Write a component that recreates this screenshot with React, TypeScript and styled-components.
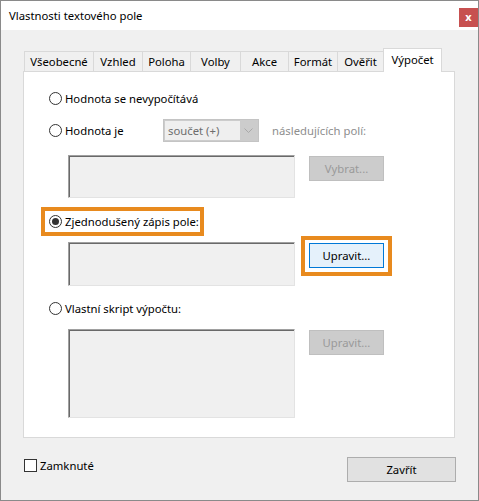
import React from "react";
import styled, { createGlobalStyle } from "styled-components";

const Global = createGlobalStyle`
  html, body { margin: 0; padding: 0; background: #fff; }
  body {
    font-family: "Noto Sans", "Segoe UI", sans-serif;
    font-size: 11.3px;
    color: #000;
  }
  * { box-sizing: border-box; }
`;

const Window = styled.div`
  width: 479px;
  height: 501px;
  border: 1px solid #8a8a8a;
  background: #f0f0f0;
  display: flex;
  flex-direction: column;
`;

const TitleBar = styled.div`
  height: 29px;
  background: #fff;
  display: flex;
  align-items: flex-start;
  justify-content: space-between;
  padding-left: 8px;
`;

const Title = styled.span`
  line-height: 29px;
  font-size: 11.3px;
`;

const CloseBtn = styled.div`
  width: 19px;
  height: 19px;
  margin-top: 7px;
  background: #c75050;
  color: #fff;
  font-weight: bold;
  font-size: 11px;
  line-height: 17px;
  text-align: center;
`;

const Body = styled.div`
  flex: 1;
  display: flex;
  flex-direction: column;
  padding: 18px 23px 0 22px;
`;

const TabRow = styled.div`
  display: flex;
  align-items: flex-end;
  height: 23px;
  padding-left: 1px;
`;

const Tab = styled.div<{ $w: number; $active?: boolean; $last?: boolean }>`
  width: ${(p) => p.$w}px;
  height: ${(p) => (p.$active ? 24 : 20)}px;
  margin-bottom: ${(p) => (p.$active ? -1 : 0)}px;
  background: ${(p) => (p.$active ? "#fff" : "#f0f0f0")};
  border-top: 1px solid #d9d9d9;
  border-left: 1px solid #d9d9d9;
  border-right: ${(p) => (p.$last || p.$active ? "1px solid #d9d9d9" : "none")};
  display: flex;
  align-items: center;
  justify-content: center;
  padding-bottom: ${(p) => (p.$active ? 3 : 0)}px;
  position: relative;
  z-index: ${(p) => (p.$active ? 1 : 0)};
`;

const Panel = styled.div`
  height: 367px;
  background: #fff;
  border: 1px solid #d9d9d9;
  display: flex;
  flex-direction: column;
  padding-left: 25px;
`;

const Row = styled.div<{ $mt: number; $h?: number }>`
  display: flex;
  align-items: center;
  margin-top: ${(p) => p.$mt}px;
  height: ${(p) => (p.$h ? `${p.$h}px` : "auto")};
`;

const FieldRow = styled.div<{ $mt: number }>`
  display: flex;
  align-items: flex-start;
  margin-top: ${(p) => p.$mt}px;
  margin-left: 19px;
`;

const Radio = styled.span<{ $checked?: boolean }>`
  width: 13px;
  height: 13px;
  border: 1px solid #333;
  border-radius: 50%;
  background: #fff;
  flex: none;
  display: flex;
  align-items: center;
  justify-content: center;
  margin-right: 3px;
  &::after {
    content: "";
    display: ${(p) => (p.$checked ? "block" : "none")};
    width: 7px;
    height: 7px;
    border-radius: 50%;
    background: #333;
  }
`;

const Label = styled.span<{ $w?: number; $muted?: boolean }>`
  white-space: nowrap;
  width: ${(p) => (p.$w ? `${p.$w}px` : "auto")};
  color: ${(p) => (p.$muted ? "#8e8e8e" : "#000")};
`;

const Combo = styled.div`
  width: 96px;
  height: 23px;
  background: #cccccc;
  border: 1px solid #c4c4c4;
  display: flex;
  align-items: stretch;
  margin-right: 13px;
  padding: 1px;
`;

const ComboText = styled.div`
  flex: 1;
  background: #efefef;
  color: #6d6d6d;
  padding-left: 3px;
  display: flex;
  align-items: center;
`;

const ComboArrow = styled.div`
  width: 17px;
  display: flex;
  align-items: center;
  justify-content: center;
`;

const SunkenBox = styled.div<{ $h: number; $mt?: number }>`
  width: 227px;
  height: ${(p) => p.$h}px;
  margin-top: ${(p) => p.$mt ?? 0}px;
  background: #f0f0f0;
  border-top: 1px solid #a0a0a0;
  border-left: 1px solid #a0a0a0;
  border-right: 1px solid #e3e3e3;
  border-bottom: 1px solid #e3e3e3;
  box-shadow: inset 1px 1px 0 #696969;
  flex: none;
`;

const Button = styled.div<{ $variant: "disabled" | "focus" | "normal"; $w: number; $mt?: number; $ml?: number }>`
  width: ${(p) => p.$w}px;
  height: 25px;
  margin-top: ${(p) => p.$mt ?? 0}px;
  margin-left: ${(p) => p.$ml ?? 0}px;
  flex: none;
  display: flex;
  align-items: center;
  justify-content: center;
  background: ${(p) => (p.$variant === "disabled" ? "#cccccc" : p.$variant === "focus" ? "#e5f1fb" : "#e1e1e1")};
  border: 1px solid ${(p) => (p.$variant === "disabled" ? "#bfbfbf" : p.$variant === "focus" ? "#0078d7" : "#adadad")};
  color: ${(p) => (p.$variant === "disabled" ? "#9a9a9a" : "#000")};
`;

const Highlight = styled.div<{ $ml: number; $w: number; $h: number; $pad: string }>`
  border: 4px solid #e88a1e;
  background: #fff;
  margin-left: ${(p) => p.$ml}px;
  width: ${(p) => p.$w}px;
  height: ${(p) => p.$h}px;
  padding: ${(p) => p.$pad};
  display: flex;
  align-items: center;
  flex: none;
  align-self: flex-start;
`;

const Footer = styled.div`
  display: flex;
  justify-content: space-between;
  align-items: flex-start;
  margin-top: 19px;
  margin-right: -1px;
  padding-left: 1px;
`;

const CheckRow = styled.div`
  display: flex;
  align-items: center;
  margin-top: 2px;
  height: 13px;
`;

const CheckBox = styled.span`
  width: 13px;
  height: 13px;
  border: 1px solid #333;
  background: #fff;
  margin-right: 3px;
`;

const tabs: [string, number][] = [
  ["Všeobecné", 69],
  ["Vzhled", 49],
  ["Poloha", 48],
  ["Volby", 50],
  ["Akce", 48],
  ["Formát", 49],
  ["Ověřit", 46],
  ["Výpočet", 59],
];

export default function App() {
  return (
    <>
      <Global />
      <Window>
        <TitleBar>
          <Title>Vlastnosti textového pole</Title>
          <CloseBtn>x</CloseBtn>
        </TitleBar>
        <Body>
          <TabRow>
            {tabs.map(([t, w], i) => (
              <Tab key={t} $w={w} $active={i === tabs.length - 1} $last={i === tabs.length - 1}>
                {t}
              </Tab>
            ))}
          </TabRow>
          <Panel>
            <Row $mt={16} $h={20}>
              <Radio />
              <Label>Hodnota se nevypočítává</Label>
            </Row>
            <Row $mt={11} $h={23}>
              <Radio />
              <Label $w={98}>Hodnota je</Label>
              <Combo>
                <ComboText>součet (+)</ComboText>
                <ComboArrow>
                  <svg width="9" height="5" viewBox="0 0 9 5">
                    <path d="M0.5 0.5 L4.5 4.5 L8.5 0.5" stroke="#a8a8a8" fill="none" strokeWidth="1" />
                  </svg>
                </ComboArrow>
              </Combo>
              <Label $muted>následujících polí:</Label>
            </Row>
            <FieldRow $mt={13}>
              <SunkenBox $h={43} />
              <Button $variant="disabled" $w={75} $mt={1} $ml={14}>
                Vybrat...
              </Button>
            </FieldRow>
            <Row $mt={9}>
              <Highlight $ml={-8} $w={163} $h={29} $pad="0 0 0 4px">
                <Radio $checked />
                <Label>Zjednodušený zápis pole:</Label>
              </Highlight>
            </Row>
            <FieldRow $mt={0}>
              <SunkenBox $h={44} $mt={6} />
              <Highlight $ml={6} $w={91} $h={40} $pad="3px 4px 4px 4px">
                <Button $variant="focus" $w={75}>
                  Upravit...
                </Button>
              </Highlight>
            </FieldRow>
            <Row $mt={12} $h={20}>
              <Radio />
              <Label>Vlastní skript výpočtu:</Label>
            </Row>
            <FieldRow $mt={11}>
              <SunkenBox $h={89} />
              <Button $variant="disabled" $w={75} $mt={1} $ml={14}>
                Upravit...
              </Button>
            </FieldRow>
          </Panel>
          <Footer>
            <CheckRow>
              <CheckBox />
              <Label>Zamknuté</Label>
            </CheckRow>
            <Button $variant="normal" $w={109}>
              Zavřít
            </Button>
          </Footer>
        </Body>
      </Window>
    </>
  );
}
